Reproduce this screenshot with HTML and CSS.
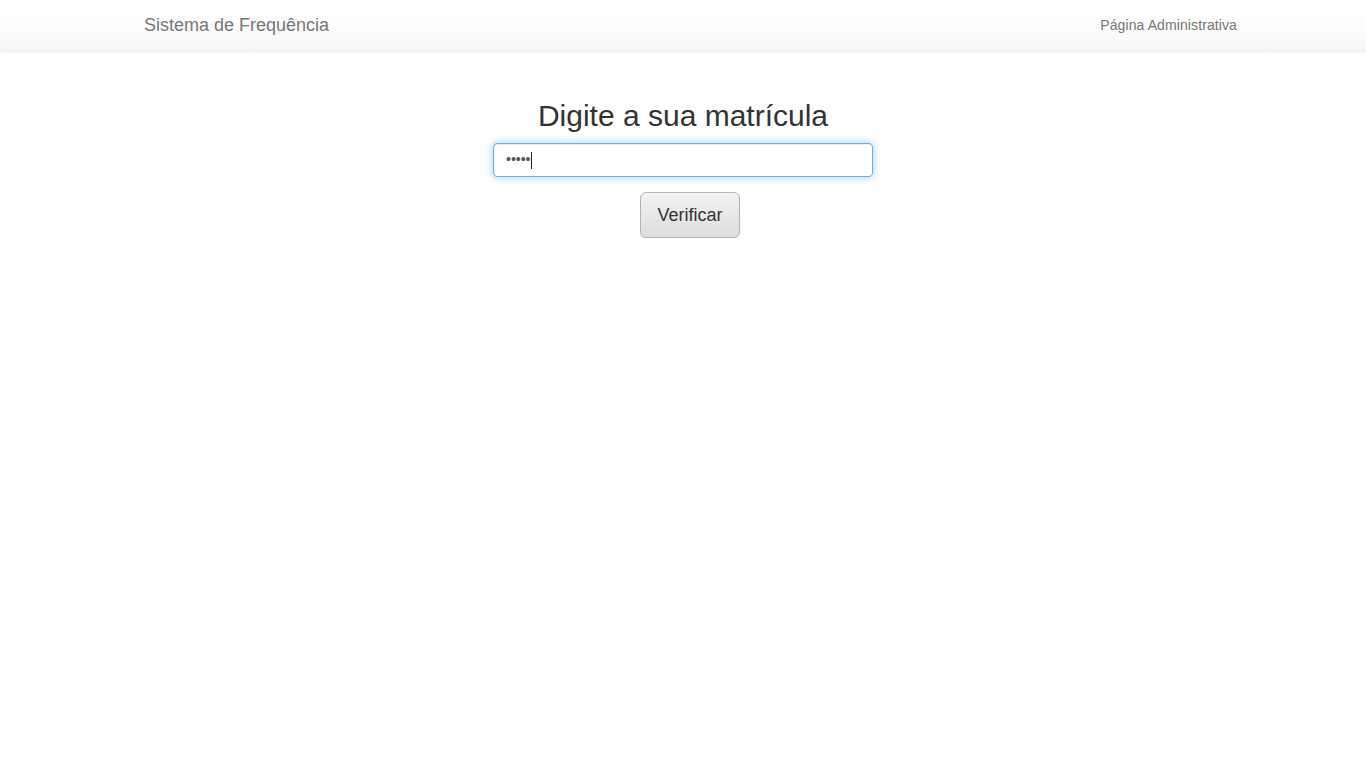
FILE: index.html
```html
<!DOCTYPE html>
<html lang="pt-BR">
<head>
<meta charset="utf-8">
<title>Sistema de Frequência</title>
<link rel="stylesheet" href="styles.css">
</head>
<body>
<nav class="navbar">
  <div class="nav-inner">
    <a class="brand" href="#">Sistema de Frequência</a>
    <a class="nav-link" href="#">Página Administrativa</a>
  </div>
</nav>
<main class="main">
  <h2 class="title">Digite a sua matrícula</h2>
  <div class="field"><span class="dots">•••••</span><span class="caret"></span></div>
  <button class="btn" type="button">Verificar</button>
</main>
</body>
</html>
```
FILE: styles.css
```css
* { box-sizing: border-box; }
html, body { margin: 0; padding: 0; }
body {
  font-family: "Liberation Sans", Arial, sans-serif;
  font-size: 14px;
  line-height: 1.42857;
  color: #333;
  background: #fff;
}
.navbar {
  height: 51px;
  background: linear-gradient(to bottom, #fff 0, #f8f8f8 100%);
  border-bottom: 1px solid #efefef;
  box-shadow: inset 0 1px 0 rgba(255,255,255,.15), 0 1px 5px rgba(0,0,0,.075);
}
.nav-inner {
  width: 1108px;
  margin: 0 auto;
  display: flex;
  justify-content: space-between;
  align-items: center;
  height: 50px;
  padding-left: 15px;
}
.brand {
  font-size: 18px;
  color: #777;
  text-decoration: none;
  line-height: 20px;
}
.nav-link {
  font-size: 14px;
  color: #777;
  text-decoration: none;
  line-height: 20px;
  letter-spacing: 0.1px;
}
.main {
  display: flex;
  flex-direction: column;
  align-items: center;
  padding-top: 48px;
}
.title {
  margin: 0 0 10px;
  font-size: 30px;
  font-weight: 500;
  line-height: 33px;
  color: #333;
  font-family: "Liberation Sans", Arial, sans-serif;
}
.field {
  width: 380px;
  height: 34px;
  margin-top: 1px;
  border: 1px solid #66afe9;
  border-radius: 4px;
  box-shadow: inset 0 1px 1px rgba(0,0,0,.075), 0 0 8px rgba(102,175,233,.6);
  padding: 6px 12px;
  display: flex;
  align-items: center;
  color: #555;
  font-size: 14px;
}
.dots { letter-spacing: 0; }
.caret {
  display: inline-block;
  width: 1px;
  height: 17px;
  background: #222;
  margin-left: 0;
}
.btn {
  margin-top: 15px;
  margin-left: 14px;
  font-family: "Liberation Sans", Arial, sans-serif;
  font-size: 18px;
  line-height: 24px;
  padding: 10px 16px;
  color: #333;
  border: 1px solid #b3b3b3;
  border-radius: 6px;
  background: linear-gradient(to bottom, #f2f2f2 0, #dedede 100%);
  box-shadow: inset 0 1px 0 rgba(255,255,255,.15), 0 1px 1px rgba(0,0,0,.075);
  cursor: pointer;
}
```
